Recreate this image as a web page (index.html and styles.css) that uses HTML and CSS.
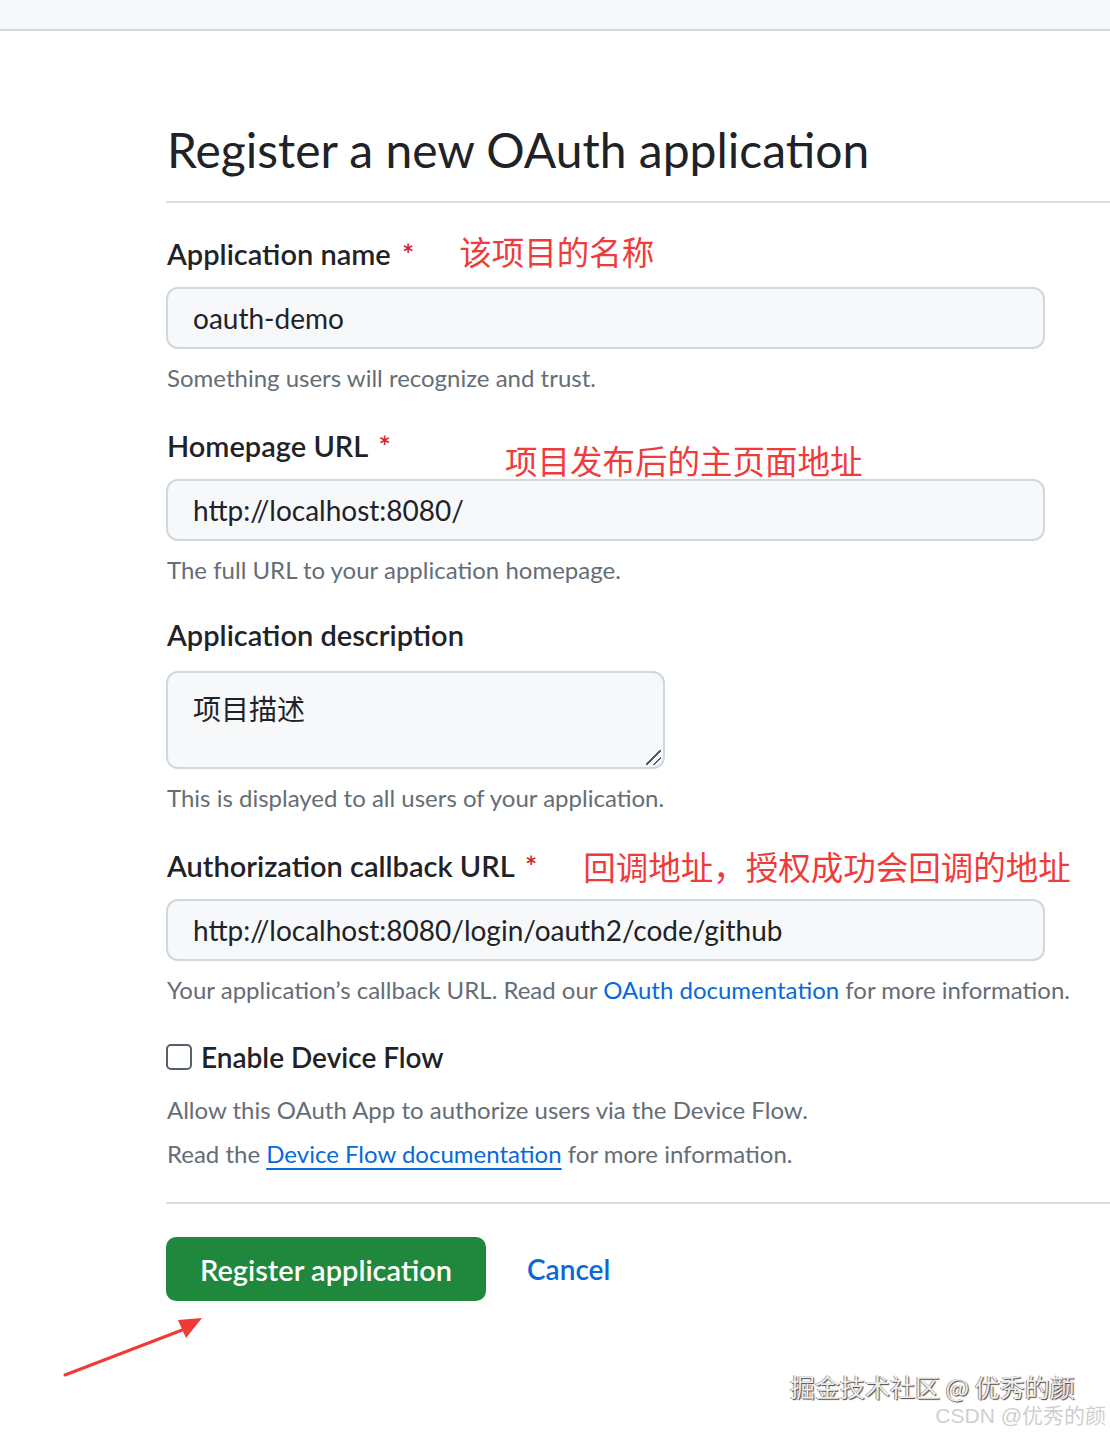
FILE: index.html
```html
<!DOCTYPE html>
<html lang="en">
<head>
    <meta charset="UTF-8">
    <meta name="viewport" content="width=device-width, initial-scale=1.0">
    <title>Register a new OAuth application</title>
    <link rel="stylesheet" href="styles.css">
</head>
<body>
    <div class="topbar"></div>

    <main class="page">
        <h1 class="title">Register a new OAuth application</h1>

        <form class="app-form">
            <div class="field">
                <div class="label-row">
                    <label for="appName">Application name <span class="req">*</span></label>
                    <span class="mark mark-name">该项目的名称</span>
                </div>
                <input type="text" id="appName" class="input" value="oauth-demo">
                <p class="hint">Something users will recognize and trust.</p>
            </div>

            <div class="field">
                <div class="label-row">
                    <label for="homeUrl">Homepage URL <span class="req">*</span></label>
                    <span class="mark mark-home">项目发布后的主页面地址</span>
                </div>
                <input type="text" id="homeUrl" class="input" value="http://localhost:8080/">
                <p class="hint">The full URL to your application homepage.</p>
            </div>

            <div class="field">
                <div class="label-row">
                    <label for="appDesc">Application description</label>
                </div>
                <div class="textarea-wrap">
                    <textarea id="appDesc" class="input textarea">项目描述</textarea>
                </div>
                <p class="hint">This is displayed to all users of your application.</p>
            </div>

            <div class="field">
                <div class="label-row">
                    <label for="callbackUrl">Authorization callback URL <span class="req">*</span></label>
                    <span class="mark mark-callback">回调地址，授权成功会回调的地址</span>
                </div>
                <input type="text" id="callbackUrl" class="input" value="http://localhost:8080/login/oauth2/code/github">
                <p class="hint">Your application’s callback URL. Read our <a href="#" class="link">OAuth documentation</a> for more information.</p>
            </div>

            <div class="field device">
                <label class="check-row" for="deviceFlow">
                    <input type="checkbox" id="deviceFlow" class="check">
                    <span>Enable Device Flow</span>
                </label>
                <p class="hint">Allow this OAuth App to authorize users via the Device Flow.</p>
                <p class="hint">Read the <a href="#" class="link underline">Device Flow documentation</a> for more information.</p>
            </div>

            <div class="actions">
                <button type="button" class="btn-primary">Register application</button>
                <a href="#" class="cancel">Cancel</a>
            </div>
        </form>

        <!-- annotation arrow pointing at the button -->
        <svg class="arrow" width="150" height="70" viewBox="0 0 150 70">
            <line x1="3" y1="66" x2="128" y2="18" stroke="#f03a36" stroke-width="3" stroke-linecap="round"/>
            <polygon points="140,9 116,11 124,29" fill="#f03a36"/>
        </svg>
    </main>

    <div class="watermark">
        <div class="wm-juejin">掘金技术社区 @ 优秀的颜</div>
        <div class="wm-csdn">CSDN @优秀的颜</div>
    </div>
</body>
</html>
```

FILE: styles.css
```css
body {
    margin: 0;
    font-family: Lato, "Noto Sans CJK SC", sans-serif;
    color: #1f2328;
    background: #fff;
    overflow: hidden;
}
.topbar {
    height: 29px;
    background: #f6f8fa;
    border-bottom: 2px solid #d0d7de;
}
.page {
    position: relative;
    padding-left: 166px;
    height: 1405px;
}
.title {
    margin: 0;
    padding: 89px 0 21px 1px;
    font-size: 48px;
    font-weight: 400;
    line-height: 60px;
    border-bottom: 2px solid #d8dee4;
}
.app-form {
    display: flex;
    flex-direction: column;
    padding-top: 5px;
}
.field {
    display: flex;
    flex-direction: column;
    align-items: flex-start;
}
.label-row {
    display: flex;
    align-items: baseline;
    white-space: nowrap;
    height: 40px;
    margin-top: 23px;
    margin-bottom: 16px;
}
.label-row > * {
    flex-shrink: 0;
}
.label-row label {
    font-size: 29px;
    font-weight: 600;
    line-height: 40px;
    padding-left: 1px;
}
.req {
    color: #cf222e;
    margin-left: 4px;
}
.mark {
    font-family: "Noto Sans CJK SC", sans-serif;
    font-size: 32.5px;
    color: #ef3b3b;
    line-height: 40px;
    position: relative;
}
.mark-name {
    margin-left: 45px;
    top: 0;
}
.mark-home {
    margin-left: 114px;
    top: 17px;
}
.mark-callback {
    margin-left: 46px;
    top: 3px;
}
.input {
    box-sizing: border-box;
    height: 62px;
    width: 879px;
    padding: 0 25px;
    font-family: Lato, "Noto Sans CJK SC", sans-serif;
    font-size: 28px;
    color: #1f2328;
    background: #f6f8fa;
    border: 2px solid #d0d7de;
    border-radius: 12px;
    outline: none;
}
.textarea-wrap {
    position: relative;
    display: flex;
}
.textarea {
    width: 499px;
    height: 98px;
    padding: 16px 25px;
    line-height: 40px;
    resize: none;
}
/* resize grip in the corner */
.textarea-wrap::after {
    content: "";
    position: absolute;
    right: 4px;
    bottom: 4px;
    width: 15px;
    height: 15px;
    background: linear-gradient(135deg, transparent 46%, #57606a 46%, #57606a 54%, transparent 54%, transparent 72%, #57606a 72%, #57606a 80%, transparent 80%);
}
.hint {
    margin: 0;
    padding-left: 1px;
    font-size: 24px;
    line-height: 44px;
    color: #656d76;
    white-space: nowrap;
}
.input + .hint,
.textarea-wrap + .hint {
    margin-top: 7px;
}
.link {
    color: #0969da;
    text-decoration: none;
}
.link.underline {
    text-decoration: underline;
    text-underline-offset: 5px;
    text-decoration-thickness: 2px;
}
.device {
    margin-top: 25px;
}
.check-row {
    display: flex;
    align-items: center;
    gap: 9px;
    font-size: 28px;
    font-weight: 600;
    height: 40px;
    margin-bottom: 11px;
}
.check {
    appearance: none;
    margin: 0;
    width: 26px;
    height: 26px;
    border: 2px solid #57606a;
    border-radius: 5px;
    background: #fff;
}
.actions {
    margin-top: 26px;
    padding-top: 33px;
    border-top: 2px solid #d8dee4;
    display: flex;
    align-items: center;
    gap: 41px;
}
.btn-primary {
    width: 320px;
    height: 64px;
    background: #1f883d;
    color: #fff;
    border: none;
    border-radius: 10px;
    font-family: Lato, sans-serif;
    font-size: 29px;
    font-weight: 600;
    cursor: pointer;
}
.cancel {
    color: #0969da;
    font-size: 28px;
    font-weight: 600;
    text-decoration: none;
}
.arrow {
    position: absolute;
    left: 62px;
    top: 1278px;
}
.watermark {
    position: absolute;
    right: 0;
    bottom: 0;
    width: 340px;
    height: 70px;
}
.wm-juejin {
    position: absolute;
    left: 20px;
    top: 2px;
    font-family: "Noto Sans CJK SC", sans-serif;
    font-size: 25px;
    color: #eeeeee;
    text-shadow: 1px 1px 1px #444, -1px 0 0 #999;
}
.wm-csdn {
    position: absolute;
    right: 4px;
    top: 33px;
    font-family: "Liberation Sans", "Noto Sans CJK SC", sans-serif;
    font-size: 21px;
    color: #cfcfcf;
}
```
